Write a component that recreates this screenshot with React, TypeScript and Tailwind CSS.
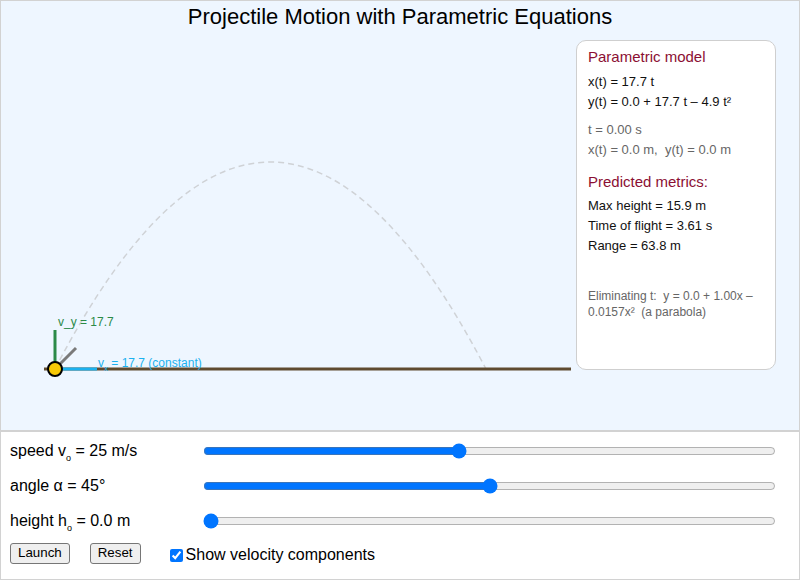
import React, { useState } from "react";

type SliderRowProps = {
  label: React.ReactNode;
  min: number;
  max: number;
  step: number;
  value: number;
  onChange: (v: number) => void;
};

function SliderRow({ label, min, max, step, value, onChange }: SliderRowProps) {
  return (
    <div className="flex h-[35px] items-center">
      <div className="w-[193px] shrink-0 text-[16px] text-black">{label}</div>
      <input
        type="range"
        min={min}
        max={max}
        step={step}
        value={value}
        onChange={(e) => onChange(Number(e.target.value))}
        className="w-[573px] accent-[#0075ff]"
      />
    </div>
  );
}

function Scene({ showComponents }: { showComponents: boolean }) {
  return (
    <svg width={575} height={340} className="block shrink-0 overflow-visible">
      {/* predicted trajectory */}
      <path
        d="M54 329 Q269 -85 485 329"
        fill="none"
        stroke="#cfd2d6"
        strokeWidth={1.5}
        strokeDasharray="6 4"
      />

      {/* ground */}
      <line x1={43} y1={329} x2={570} y2={329} stroke="#5f4b30" strokeWidth={3} />

      {showComponents && (
        <>
          <text x={57} y={286} fontSize={12} fill="#2b8a48">
            v_y = 17.7
          </text>
          <text x={97} y={327} fontSize={12} fill="#1bb1ef">
            v
            <tspan fontSize={8} dy={4}>
              x
            </tspan>
            <tspan dy={-4}> = 17.7 (constant)</tspan>
          </text>
          <line x1={54} y1={329} x2={96} y2={329} stroke="#1bb1ef" strokeWidth={3} />
          <line x1={54} y1={329} x2={54} y2={290} stroke="#2b8a48" strokeWidth={3} />
        </>
      )}

      {/* launch velocity vector */}
      <line x1={54} y1={329} x2={75} y2={308} stroke="#7a7a7a" strokeWidth={3} />

      {/* projectile */}
      <circle cx={54} cy={329} r={7} fill="#f7c906" stroke="#000" strokeWidth={2} />
    </svg>
  );
}

function ModelPanel() {
  return (
    <div className="h-[330px] w-[200px] shrink-0 rounded-[10px] border border-[#cfcfcf] bg-white pl-[11px] pr-[10px] pt-[7px]">
      <div className="text-[15px] leading-[18px] text-[#8b0f33]">Parametric model</div>
      <div className="mt-[6px] text-[13px] leading-[20px] text-[#111]">
        <div>x(t) = 17.7 t</div>
        <div>y(t) = 0.0 + 17.7 t – 4.9 t²</div>
      </div>
      <div className="mt-[8px] text-[13px] leading-[20px] text-[#666]">
        <div>t = 0.00 s</div>
        <div>{"x(t) = 0.0 m,\u00a0 y(t) = 0.0 m"}</div>
      </div>
      <div className="mt-[13px] text-[15px] leading-[18px] text-[#8b0f33]">Predicted metrics:</div>
      <div className="mt-[5px] text-[13px] leading-[20px] text-[#111]">
        <div>Max height = 15.9 m</div>
        <div>Time of flight = 3.61 s</div>
        <div>Range = 63.8 m</div>
      </div>
      <div className="mt-[32px] text-[12px] leading-[16px] text-[#666]">
        {"Eliminating t:\u00a0 y = 0.0 + 1.00x – 0.0157x²\u00a0 (a parabola)"}
      </div>
    </div>
  );
}

export default function App() {
  const [speed, setSpeed] = useState(25);
  const [angle, setAngle] = useState(45);
  const [height, setHeight] = useState(0);
  const [showComponents, setShowComponents] = useState(true);

  return (
    <div className="w-[800px] bg-white font-['Liberation_Sans',Arial,sans-serif]">
      <div className="h-[431px] border border-[#d2d2d2] bg-[#eef6ff]">
        <h1 className="pt-[3px] text-center text-[22px] leading-[26px] text-black">
          Projectile Motion with Parametric Equations
        </h1>
        <div className="mt-[10px] flex">
          <Scene showComponents={showComponents} />
          <ModelPanel />
        </div>
      </div>

      <div className="h-[149px] border border-[#d2d2d2] px-[9px] pt-[1px]">
        <SliderRow
          label={
            <>
              speed v<sub className="-bottom-[5px] text-[9px]">o</sub> = {speed} m/s
            </>
          }
          min={5}
          max={50}
          step={1}
          value={speed}
          onChange={setSpeed}
        />
        <SliderRow
          label={<>angle α = {angle}°</>}
          min={5}
          max={85}
          step={1}
          value={angle}
          onChange={setAngle}
        />
        <SliderRow
          label={
            <>
              height h<sub className="-bottom-[5px] text-[9px]">o</sub> = {height.toFixed(1)} m
            </>
          }
          min={0}
          max={30}
          step={0.5}
          value={height}
          onChange={setHeight}
        />

        <div className="flex h-[30px] items-center">
          <button
            type="button"
            className="h-[21px] rounded-[3px] border border-[#767676] bg-[#efefef] px-[7px] text-[13.33px] leading-none text-black"
          >
            Launch
          </button>
          <button
            type="button"
            className="ml-[20px] h-[21px] rounded-[3px] border border-[#767676] bg-[#efefef] px-[7px] text-[13.33px] leading-none text-black"
          >
            Reset
          </button>
          <label className="ml-[25px] mt-[4px] flex items-center text-[16px] text-black">
            <input
              type="checkbox"
              checked={showComponents}
              onChange={(e) => setShowComponents(e.target.checked)}
              className="ml-[4px] mr-[3px] h-[13px] w-[13px] accent-[#0075ff]"
            />
            Show velocity components
          </label>
        </div>
      </div>
    </div>
  );
}
